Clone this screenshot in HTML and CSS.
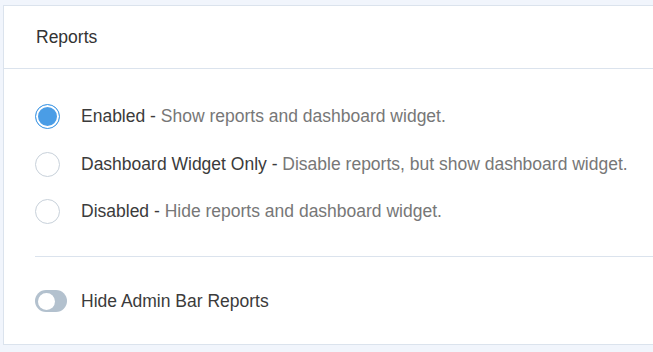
FILE: index.html
```html
<!DOCTYPE html>
<html>
<head>
    <meta charset="UTF-8">
    <title>Reports</title>
    <link rel="stylesheet" href="styles.css">
</head>
<body>
    <div class="card">
        <div class="card-header">Reports</div>

        <div class="card-body">
            <div class="options">
                <label class="option">
                    <span class="radio checked"></span>
                    <span class="option-text">Enabled - <span class="desc">Show reports and dashboard widget.</span></span>
                </label>
                <label class="option">
                    <span class="radio"></span>
                    <span class="option-text">Dashboard Widget Only - <span class="desc">Disable reports, but show dashboard widget.</span></span>
                </label>
                <label class="option">
                    <span class="radio"></span>
                    <span class="option-text">Disabled - <span class="desc">Hide reports and dashboard widget.</span></span>
                </label>
            </div>

            <div class="divider"></div>

            <label class="toggle-row">
                <span class="toggle"></span>
                <span class="option-text">Hide Admin Bar Reports</span>
            </label>
        </div>
    </div>
</body>
</html>
```

FILE: styles.css
```css
body {
    margin: 0;
    padding: 5px 0 6px 3px;
    background: #f1f5fc;
    font-family: "Liberation Sans", Arial, sans-serif;
}

.card {
    background: #fff;
    border: 1px solid #dbe3ed;
    border-right: none;
}

.card-header {
    padding: 21px 32px;
    line-height: 20px;
    font-size: 17.5px;
    color: #333;
    border-bottom: 1px solid #dbe3ed;
}

.card-body {
    padding: 35px 0 32px 31px;
}

.options {
    display: flex;
    flex-direction: column;
    gap: 22.5px;
}

.option {
    display: flex;
    align-items: center;
    gap: 21px;
    height: 25px;
}

.option-text {
    font-size: 17.5px;
    color: #3b3b3b;
}

.desc {
    color: #777;
}

.radio {
    width: 25px;
    height: 25px;
    border: 1px solid #c8d1da;
    border-radius: 50%;
    box-sizing: border-box;
    flex-shrink: 0;
}

.radio.checked {
    border-color: #4a9de6;
    background: #4a9de6;
    box-shadow: inset 0 0 0 2px #fff;
}

.divider {
    height: 1px;
    background: #dbe3ed;
    margin: 32px 0 33px;
}

.toggle-row {
    display: flex;
    align-items: center;
    gap: 14px;
    height: 22px;
}

.toggle {
    position: relative;
    width: 32px;
    height: 22px;
    border-radius: 11px;
    background: #b3c1ce;
    flex-shrink: 0;
}

.toggle:before {
    content: '';
    position: absolute;
    left: 2.5px;
    top: 2.5px;
    width: 17px;
    height: 17px;
    border-radius: 50%;
    background: #fff;
}
```
